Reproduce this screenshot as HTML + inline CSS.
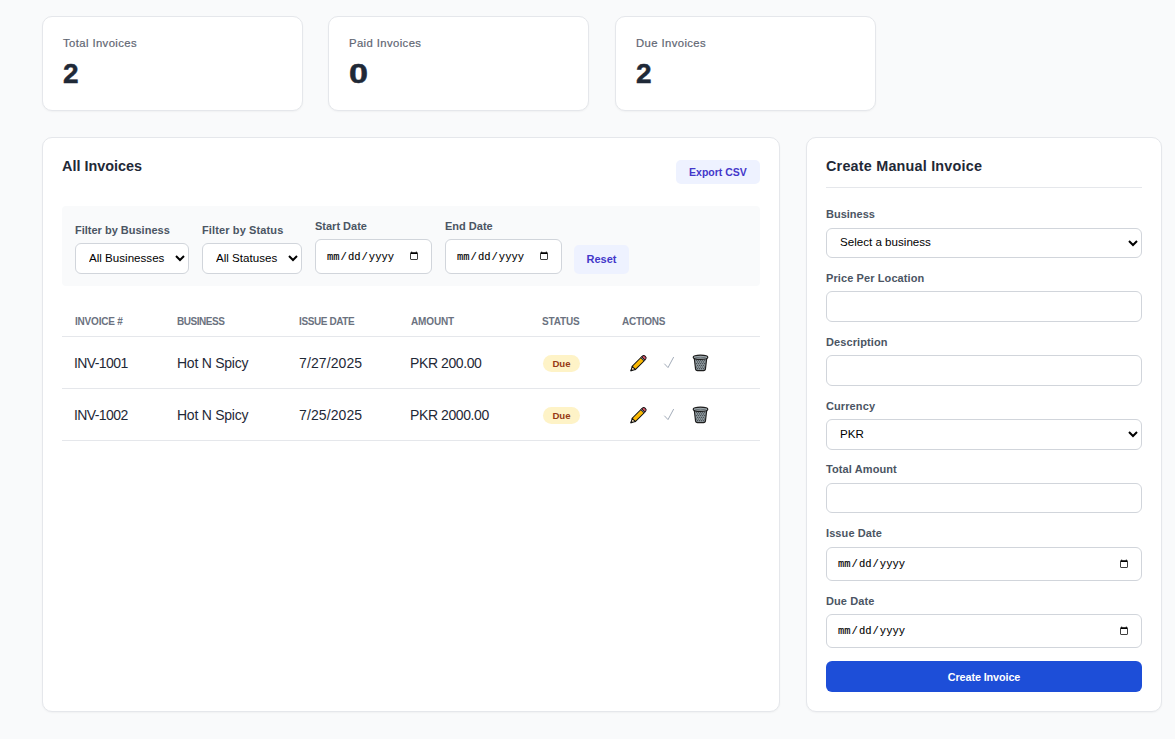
<!DOCTYPE html>
<html><head><meta charset="utf-8">
<style>
*{box-sizing:border-box;margin:0;padding:0}
html,body{width:1175px;height:739px;overflow:hidden}
body{background:#f9fafb;font-family:"Liberation Sans",sans-serif;position:relative;color:#1f2937}
.card{position:absolute;background:#fff;border:1px solid #e5e7eb;border-radius:10px;box-shadow:0 1px 2px rgba(0,0,0,.04)}
.stat{top:16px;height:95px;width:261px}
.stat .lbl{position:absolute;left:20px;top:19px;font-size:11.3px;color:#5f6673;letter-spacing:.4px;line-height:14px;-webkit-text-stroke:.2px #5f6673}
.stat .num{position:absolute;left:20px;top:40px;font-size:28px;font-weight:bold;color:#1f2937;line-height:34px;-webkit-text-stroke:.5px #1f2937;transform-origin:0 0}
.abs{position:absolute}
.h2{font-size:14.4px;font-weight:bold;color:#1f2937;line-height:18px;white-space:nowrap}
.btn-light{background:#eef2ff;color:#4338ca;font-weight:bold;border-radius:5px;text-align:center}
.lab{font-size:11px;font-weight:bold;color:#4b5563;line-height:14px;white-space:nowrap}
select,input{font-family:"Liberation Sans",sans-serif;background:#fff;border:1px solid #d1d5db;border-radius:6px;color:#000}
input[type=date]{font-family:"Liberation Mono",monospace;font-size:10.5px!important;color:#000;-webkit-text-stroke:.12px #000}
.th{font-size:10px;font-weight:bold;color:#6b7280;line-height:12px;white-space:nowrap;letter-spacing:-.15px}
.td{font-size:14px;color:#1f2937;line-height:16px;white-space:nowrap;letter-spacing:-.45px}
.rowline{position:absolute;left:62px;width:698px;height:1px;background:#e5e7eb}
.badge{position:absolute;width:37px;height:17px;border-radius:9px;background:#fef3c7;color:#963a16;font-size:9.6px;font-weight:bold;text-align:center;line-height:18px}
</style></head><body>

<div class="card stat" style="left:42px"><div class="lbl">Total Invoices</div><div class="num">2</div></div>
<div class="card stat" style="left:328px"><div class="lbl">Paid Invoices</div><div class="num" style="transform:scaleX(1.22)">0</div></div>
<div class="card stat" style="left:615px"><div class="lbl">Due Invoices</div><div class="num">2</div></div>

<!-- main card -->
<div class="card" style="left:42px;top:137px;width:738px;height:575px"></div>
<div class="abs h2" style="left:62px;top:157px">All Invoices</div>
<div class="abs btn-light" style="left:676px;top:160px;width:84px;height:24px;font-size:10.5px;line-height:24px">Export CSV</div>

<div class="abs" style="left:62px;top:206px;width:698px;height:80px;background:#f9fafb;border-radius:4px"></div>
<div class="abs lab" style="left:75px;top:223px">Filter by Business</div>
<div class="abs lab" style="left:202px;top:223px;letter-spacing:.12px">Filter by Status</div>
<div class="abs lab" style="left:315px;top:219px">Start Date</div>
<div class="abs lab" style="left:445px;top:219px">End Date</div>
<select class="abs" style="left:75px;top:243px;width:114px;height:31px;font-size:11.6px;padding-left:9px;padding-bottom:3px"><option>All Businesses</option></select>
<select class="abs" style="left:202px;top:243px;width:100px;height:31px;font-size:11.6px;padding-left:9px;padding-bottom:3px"><option>All Statuses</option></select>
<input type="date" class="abs" style="left:315px;top:239px;width:117px;height:35px;font-size:11px;padding:0 10px">
<input type="date" class="abs" style="left:445px;top:239px;width:117px;height:35px;font-size:11px;padding:0 10px">
<div class="abs btn-light" style="left:574px;top:245px;width:55px;height:29px;font-size:11px;line-height:29px">Reset</div>

<div class="abs th" style="left:75px;top:316px;letter-spacing:-.2px">INVOICE #</div>
<div class="abs th" style="left:177px;top:316px;letter-spacing:-.45px">BUSINESS</div>
<div class="abs th" style="left:299px;top:316px;letter-spacing:-.4px">ISSUE DATE</div>
<div class="abs th" style="left:411px;top:316px">AMOUNT</div>
<div class="abs th" style="left:542px;top:316px">STATUS</div>
<div class="abs th" style="left:622px;top:316px;letter-spacing:-.28px">ACTIONS</div>
<div class="rowline" style="top:336px"></div>

<div class="abs td" style="left:74px;top:355px;letter-spacing:-.6px">INV-1001</div>
<div class="abs td" style="left:177px;top:355px;letter-spacing:-.25px">Hot N Spicy</div>
<div class="abs td" style="left:299px;top:355px;letter-spacing:.1px">7/27/2025</div>
<div class="abs td" style="left:410px;top:355px;letter-spacing:-.4px">PKR 200.00</div>
<div class="badge" style="left:543px;top:355px">Due</div>

<svg class="abs" style="left:626px;top:351px" width="24" height="24" viewBox="0 0 24 24"><g transform="translate(12,12.7) rotate(-45) scale(.95)">
<path d="M-10.6,0 L-6.2,-2.4 L-6.2,2.4 Z" fill="#f6dfbd" stroke="#111" stroke-width="1" stroke-linejoin="round"/>
<path d="M-10.9,0 L-9,-1 L-9,1 Z" fill="#111" stroke="#111" stroke-width=".5"/>
<rect x="-6.2" y="-2.4" width="12.8" height="4.8" fill="#fbbc05" stroke="#111" stroke-width="1"/>
<line x1="-6.2" y1="0" x2="6.6" y2="0" stroke="#f6a800" stroke-width=".6"/>
<rect x="6.6" y="-2.4" width="1.2" height="4.8" fill="#e6eef0" stroke="#111" stroke-width=".8"/>
<path d="M7.8,-2.4 L9,-2.4 Q10.9,-2.4 10.9,0 Q10.9,2.4 9,2.4 L7.8,2.4 Z" fill="#e0556a" stroke="#111" stroke-width="1"/>
</g></svg>
<svg class="abs" style="left:662px;top:355px" width="14" height="15" viewBox="0 0 14 15"><path d="M2.6,9 L6,12.6 L11.5,2.4" fill="none" stroke="#a3acb9" stroke-width="1" stroke-linecap="round" stroke-linejoin="round"/></svg>
<svg class="abs" style="left:691px;top:353px" width="19" height="19" viewBox="0 0 19 19">

<path d="M3.2,4.5 L4.6,16.2 Q4.9,17.6 6.4,17.6 L12.6,17.6 Q14.1,17.6 14.4,16.2 L15.8,4.5 Z" fill="#8f999e" stroke="#1e1e1e" stroke-width="1.2" stroke-linejoin="round"/><g fill="#3b4247"><circle cx="5.6" cy="7.2" r=".6"/><circle cx="7.6" cy="7.2" r=".6"/><circle cx="9.6" cy="7.2" r=".6"/><circle cx="11.6" cy="7.2" r=".6"/><circle cx="13.6" cy="7.2" r=".6"/><circle cx="6.6" cy="8.9" r=".6"/><circle cx="8.6" cy="8.9" r=".6"/><circle cx="10.6" cy="8.9" r=".6"/><circle cx="12.6" cy="8.9" r=".6"/><circle cx="5.6" cy="10.6" r=".6"/><circle cx="7.6" cy="10.6" r=".6"/><circle cx="9.6" cy="10.6" r=".6"/><circle cx="11.6" cy="10.6" r=".6"/><circle cx="13.6" cy="10.6" r=".6"/><circle cx="6.6" cy="12.3" r=".6"/><circle cx="8.6" cy="12.3" r=".6"/><circle cx="10.6" cy="12.3" r=".6"/><circle cx="12.6" cy="12.3" r=".6"/><circle cx="5.6" cy="14.0" r=".6"/><circle cx="7.6" cy="14.0" r=".6"/><circle cx="9.6" cy="14.0" r=".6"/><circle cx="11.6" cy="14.0" r=".6"/><circle cx="13.6" cy="14.0" r=".6"/><circle cx="6.6" cy="15.7" r=".6"/><circle cx="8.6" cy="15.7" r=".6"/><circle cx="10.6" cy="15.7" r=".6"/><circle cx="12.6" cy="15.7" r=".6"/></g>
<path d="M2.2,4.3 Q2.2,2.2 9.5,2.2 Q16.8,2.2 16.8,4.3 Q16.8,6.4 9.5,6.4 Q2.2,6.4 2.2,4.3 Z" fill="#a3adb1" stroke="#1e1e1e" stroke-width="1.2"/>
<path d="M4.2,4.8 Q9.5,3.6 14.8,4.8" fill="none" stroke="#6a7378" stroke-width="1"/>
</svg>
<div class="rowline" style="top:388px"></div>

<div class="abs td" style="left:74px;top:407px;letter-spacing:-.6px">INV-1002</div>
<div class="abs td" style="left:177px;top:407px;letter-spacing:-.25px">Hot N Spicy</div>
<div class="abs td" style="left:299px;top:407px;letter-spacing:.1px">7/25/2025</div>
<div class="abs td" style="left:410px;top:407px;letter-spacing:-.4px">PKR 2000.00</div>
<div class="badge" style="left:543px;top:407px">Due</div>

<svg class="abs" style="left:626px;top:403px" width="24" height="24" viewBox="0 0 24 24"><g transform="translate(12,12.7) rotate(-45) scale(.95)">
<path d="M-10.6,0 L-6.2,-2.4 L-6.2,2.4 Z" fill="#f6dfbd" stroke="#111" stroke-width="1" stroke-linejoin="round"/>
<path d="M-10.9,0 L-9,-1 L-9,1 Z" fill="#111" stroke="#111" stroke-width=".5"/>
<rect x="-6.2" y="-2.4" width="12.8" height="4.8" fill="#fbbc05" stroke="#111" stroke-width="1"/>
<line x1="-6.2" y1="0" x2="6.6" y2="0" stroke="#f6a800" stroke-width=".6"/>
<rect x="6.6" y="-2.4" width="1.2" height="4.8" fill="#e6eef0" stroke="#111" stroke-width=".8"/>
<path d="M7.8,-2.4 L9,-2.4 Q10.9,-2.4 10.9,0 Q10.9,2.4 9,2.4 L7.8,2.4 Z" fill="#e0556a" stroke="#111" stroke-width="1"/>
</g></svg>
<svg class="abs" style="left:662px;top:407px" width="14" height="15" viewBox="0 0 14 15"><path d="M2.6,9 L6,12.6 L11.5,2.4" fill="none" stroke="#a3acb9" stroke-width="1" stroke-linecap="round" stroke-linejoin="round"/></svg>
<svg class="abs" style="left:691px;top:405px" width="19" height="19" viewBox="0 0 19 19">

<path d="M3.2,4.5 L4.6,16.2 Q4.9,17.6 6.4,17.6 L12.6,17.6 Q14.1,17.6 14.4,16.2 L15.8,4.5 Z" fill="#8f999e" stroke="#1e1e1e" stroke-width="1.2" stroke-linejoin="round"/><g fill="#3b4247"><circle cx="5.6" cy="7.2" r=".6"/><circle cx="7.6" cy="7.2" r=".6"/><circle cx="9.6" cy="7.2" r=".6"/><circle cx="11.6" cy="7.2" r=".6"/><circle cx="13.6" cy="7.2" r=".6"/><circle cx="6.6" cy="8.9" r=".6"/><circle cx="8.6" cy="8.9" r=".6"/><circle cx="10.6" cy="8.9" r=".6"/><circle cx="12.6" cy="8.9" r=".6"/><circle cx="5.6" cy="10.6" r=".6"/><circle cx="7.6" cy="10.6" r=".6"/><circle cx="9.6" cy="10.6" r=".6"/><circle cx="11.6" cy="10.6" r=".6"/><circle cx="13.6" cy="10.6" r=".6"/><circle cx="6.6" cy="12.3" r=".6"/><circle cx="8.6" cy="12.3" r=".6"/><circle cx="10.6" cy="12.3" r=".6"/><circle cx="12.6" cy="12.3" r=".6"/><circle cx="5.6" cy="14.0" r=".6"/><circle cx="7.6" cy="14.0" r=".6"/><circle cx="9.6" cy="14.0" r=".6"/><circle cx="11.6" cy="14.0" r=".6"/><circle cx="13.6" cy="14.0" r=".6"/><circle cx="6.6" cy="15.7" r=".6"/><circle cx="8.6" cy="15.7" r=".6"/><circle cx="10.6" cy="15.7" r=".6"/><circle cx="12.6" cy="15.7" r=".6"/></g>
<path d="M2.2,4.3 Q2.2,2.2 9.5,2.2 Q16.8,2.2 16.8,4.3 Q16.8,6.4 9.5,6.4 Q2.2,6.4 2.2,4.3 Z" fill="#a3adb1" stroke="#1e1e1e" stroke-width="1.2"/>
<path d="M4.2,4.8 Q9.5,3.6 14.8,4.8" fill="none" stroke="#6a7378" stroke-width="1"/>
</svg>
<div class="rowline" style="top:440px"></div>

<!-- right card -->
<div class="card" style="left:806px;top:137px;width:356px;height:575px"></div>
<div class="abs h2" style="left:826px;top:157px;letter-spacing:.2px">Create Manual Invoice</div>
<div class="abs" style="left:826px;top:187px;width:316px;height:1px;background:#e5e7eb"></div>

<div class="abs lab" style="left:826px;top:207px">Business</div>
<select class="abs" style="left:826px;top:228px;width:316px;height:30px;font-size:11.6px;padding-left:9px;padding-bottom:3px"><option>Select a business</option></select>
<div class="abs lab" style="left:826px;top:271px;letter-spacing:.1px">Price Per Location</div>
<input class="abs" style="left:826px;top:291px;width:316px;height:31px">
<div class="abs lab" style="left:826px;top:335px;letter-spacing:.1px">Description</div>
<input class="abs" style="left:826px;top:355px;width:316px;height:31px">
<div class="abs lab" style="left:826px;top:399px;letter-spacing:.1px">Currency</div>
<select class="abs" style="left:826px;top:419px;width:316px;height:31px;font-size:11.6px;padding-left:9px;padding-bottom:2px"><option>PKR</option></select>
<div class="abs lab" style="left:826px;top:462px;letter-spacing:.1px">Total Amount</div>
<input class="abs" style="left:826px;top:483px;width:316px;height:30px">
<div class="abs lab" style="left:826px;top:526px;letter-spacing:.1px">Issue Date</div>
<input type="date" class="abs" style="left:826px;top:547px;width:316px;height:34px;font-size:11px;padding:0 10px">
<div class="abs lab" style="left:826px;top:594px;letter-spacing:.1px">Due Date</div>
<input type="date" class="abs" style="left:826px;top:614px;width:316px;height:34px;font-size:11px;padding:0 10px">
<div class="abs" style="left:826px;top:661px;width:316px;height:31px;background:#1d4ed8;border-radius:6px;color:#fff;font-weight:bold;font-size:10.8px;text-align:center;line-height:33px;letter-spacing:-.1px">Create Invoice</div>

</body></html>
